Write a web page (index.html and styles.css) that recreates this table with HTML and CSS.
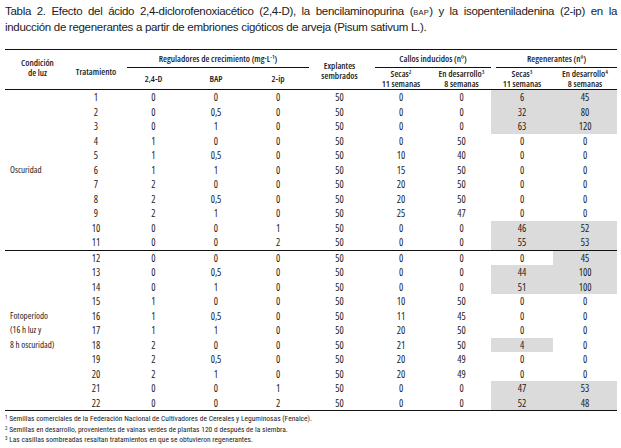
FILE: index.html
```html
<!DOCTYPE html>
<html lang="es">
<head>
<meta charset="utf-8">
<title>Tabla 2</title>
<link rel="stylesheet" href="styles.css">
</head>
<body>
<div class="page">
  <p class="caption"><span class="l1">Tabla 2. Efecto del ácido 2,4-diclorofenoxiacético (2,4-D), la bencilaminopurina (<span class="sc">BAP</span>) y la isopenteniladenina (2-ip) en la</span><span class="l2">inducción de regenerantes a partir de embriones cigóticos de arveja (Pisum sativum L.).</span></p>
  <table class="data">
    <colgroup>
      <col class="c1"><col class="c2"><col class="c3"><col class="c4"><col class="c5"><col class="c6"><col class="c7"><col class="c8"><col class="c9"><col class="c10">
    </colgroup>
    <thead>
      <tr class="h1">
        <th rowspan="2" class="span cond">Condición<br>de luz</th>
        <th rowspan="2" class="span trat">Tratamiento</th>
        <th colspan="3" class="grp"><div>Reguladores de crecimiento (mg·L<sup>-1</sup>)</div></th>
        <th rowspan="2" class="span expl">Explantes<br>sembrados</th>
        <th colspan="2" class="grp"><div>Callos inducidos (nº)</div></th>
        <th colspan="2" class="grp"><div>Regenerantes (nº)</div></th>
      </tr>
      <tr class="h2">
        <th>2,4-D</th>
        <th>BAP</th>
        <th>2-ip</th>
        <th>Secas<sup>2</sup><br>11 semanas</th>
        <th>En desarrollo<sup>3</sup><br>8 semanas</th>
        <th>Secas<sup>3</sup><br>11 semanas</th>
        <th>En desarrollo<sup>4</sup><br>8 semanas</th>
      </tr>
    </thead>
    <tbody class="g1">
      <tr><td rowspan="11" class="lab">Oscuridad</td><td>1</td><td>0</td><td>0</td><td>0</td><td>50</td><td>0</td><td>0</td><td class="s">6</td><td class="s">45</td></tr>
      <tr><td>2</td><td>0</td><td>0,5</td><td>0</td><td>50</td><td>0</td><td>0</td><td class="s">32</td><td class="s">80</td></tr>
      <tr><td>3</td><td>0</td><td>1</td><td>0</td><td>50</td><td>0</td><td>0</td><td class="s">63</td><td class="s">120</td></tr>
      <tr><td>4</td><td>1</td><td>0</td><td>0</td><td>50</td><td>0</td><td>50</td><td>0</td><td>0</td></tr>
      <tr><td>5</td><td>1</td><td>0,5</td><td>0</td><td>50</td><td>10</td><td>40</td><td>0</td><td>0</td></tr>
      <tr><td>6</td><td>1</td><td>1</td><td>0</td><td>50</td><td>15</td><td>50</td><td>0</td><td>0</td></tr>
      <tr><td>7</td><td>2</td><td>0</td><td>0</td><td>50</td><td>20</td><td>50</td><td>0</td><td>0</td></tr>
      <tr><td>8</td><td>2</td><td>0,5</td><td>0</td><td>50</td><td>20</td><td>50</td><td>0</td><td>0</td></tr>
      <tr><td>9</td><td>2</td><td>1</td><td>0</td><td>50</td><td>25</td><td>47</td><td>0</td><td>0</td></tr>
      <tr><td>10</td><td>0</td><td>0</td><td>1</td><td>50</td><td>0</td><td>0</td><td class="s">46</td><td class="s">52</td></tr>
      <tr><td>11</td><td>0</td><td>0</td><td>2</td><td>50</td><td>0</td><td>0</td><td class="s">55</td><td class="s">53</td></tr>
    </tbody>
    <tbody class="g2">
      <tr><td rowspan="11" class="lab">Fotoperíodo<br>(16 h luz y<br>8 h oscuridad)</td><td>12</td><td>0</td><td>0</td><td>0</td><td>50</td><td>0</td><td>0</td><td>0</td><td class="s">45</td></tr>
      <tr><td>13</td><td>0</td><td>0,5</td><td>0</td><td>50</td><td>0</td><td>0</td><td class="s">44</td><td class="s">100</td></tr>
      <tr><td>14</td><td>0</td><td>1</td><td>0</td><td>50</td><td>0</td><td>0</td><td class="s">51</td><td class="s">100</td></tr>
      <tr><td>15</td><td>1</td><td>0</td><td>0</td><td>50</td><td>10</td><td>50</td><td>0</td><td>0</td></tr>
      <tr><td>16</td><td>1</td><td>0,5</td><td>0</td><td>50</td><td>11</td><td>45</td><td>0</td><td>0</td></tr>
      <tr><td>17</td><td>1</td><td>1</td><td>0</td><td>50</td><td>20</td><td>50</td><td>0</td><td>0</td></tr>
      <tr><td>18</td><td>2</td><td>0</td><td>0</td><td>50</td><td>21</td><td>50</td><td class="s">4</td><td>0</td></tr>
      <tr><td>19</td><td>2</td><td>0,5</td><td>0</td><td>50</td><td>20</td><td>49</td><td>0</td><td>0</td></tr>
      <tr><td>20</td><td>2</td><td>1</td><td>0</td><td>50</td><td>20</td><td>49</td><td>0</td><td>0</td></tr>
      <tr><td>21</td><td>0</td><td>0</td><td>1</td><td>50</td><td>0</td><td>0</td><td class="s">47</td><td class="s">53</td></tr>
      <tr class="last"><td>22</td><td>0</td><td>0</td><td>2</td><td>50</td><td>0</td><td>0</td><td class="s">52</td><td class="s">48</td></tr>
    </tbody>
  </table>
  <div class="notes">
    <p><sup>1</sup> Semillas comerciales de la Federación Nacional de Cultivadores de Cereales y Leguminosas (Fenalce).</p>
    <p><sup>2</sup> Semillas en desarrollo, provenientes de vainas verdes de plantas 120 d después de la siembra.</p>
    <p><sup>3</sup> Las casillas sombreadas resaltan tratamientos en que se obtuvieron regenerantes.</p>
  </div>
</div>
</body>
</html>
```

FILE: styles.css
```css
html, body {
  margin: 0;
  padding: 0;
  background: #ffffff;
}

.page {
  width: 612px;
  padding: 4px 4px 0 5px;
  color: #1b1b1b;
}

.caption {
  margin: 0;
  font-family: "Liberation Sans", Arial, sans-serif;
  font-size: 11.5px;
  letter-spacing: -0.3px;
  line-height: 15px;
}

.caption .l1 {
  display: block;
  text-align: justify;
  text-align-last: justify;
}

.caption .l2 {
  display: block;
}

.caption .sc {
  font-size: 7.5px;
  letter-spacing: 0.3px;
}

.data {
  margin-top: 14px;
  width: 612px;
  border-collapse: separate;
  border-spacing: 0;
  table-layout: fixed;
}

.c1 { width: 65px; }
.c2 { width: 52px; }
.c3 { width: 63px; }
.c4 { width: 62px; }
.c5 { width: 62px; }
.c6 { width: 61px; }
.c7 { width: 62px; }
.c8 { width: 59px; }
.c9 { width: 62px; }
.c10 { width: 64px; }

.data th {
  padding: 0;
  font-family: "Open Sans", "Liberation Sans", sans-serif;
  font-stretch: 75%;
  font-size: 9px;
  font-weight: 600;
  line-height: 10px;
  text-align: center;
  vertical-align: middle;
  white-space: nowrap;
}

.data sup {
  font-size: 6px;
  line-height: 0;
  vertical-align: 3px;
}

.h1 th {
  border-top: 1.5px solid #111;
}

.h1 th.grp {
  height: 18px;
  vertical-align: bottom;
}

.h1 th.grp div {
  margin-left: 5px;
  padding: 4px 0 3px;
  line-height: 10px;
  border-bottom: 1px solid #111;
}

.h1 th.span {
  border-bottom: 1px solid #111;
}

.h1 th.cond {
  padding-bottom: 3px;
}

.h1 th.trat {
  padding-top: 5px;
}

.h1 th.expl {
  padding-top: 2px;
}

.h2 th {
  height: 21px;
  border-bottom: 1px solid #111;
}

.data td {
  height: 14.5px;
  padding: 0;
  font-family: "Open Sans", "Liberation Sans", sans-serif;
  font-stretch: 75%;
  font-size: 10px;
  line-height: 14.5px;
  text-align: center;
  vertical-align: middle;
  white-space: nowrap;
}

.data td.lab {
  text-align: left;
  padding-left: 5px;
  font-size: 9px;
  line-height: 14.5px;
}

.data td.s {
  background: #dbdbdb;
}

.g2 tr:first-child td {
  border-top: 1px solid #111;
}

.g2 td.lab,
.g2 tr.last td {
  border-bottom: 1.5px solid #111;
}

.notes {
  padding-top: 3px;
  font-family: "Roboto Condensed", "Liberation Sans", sans-serif;
  font-size: 7.5px;
  line-height: 10.5px;
}

.notes p {
  margin: 0;
  white-space: nowrap;
}

.notes sup {
  font-size: 5px;
  line-height: 0;
  vertical-align: 2px;
}
```
